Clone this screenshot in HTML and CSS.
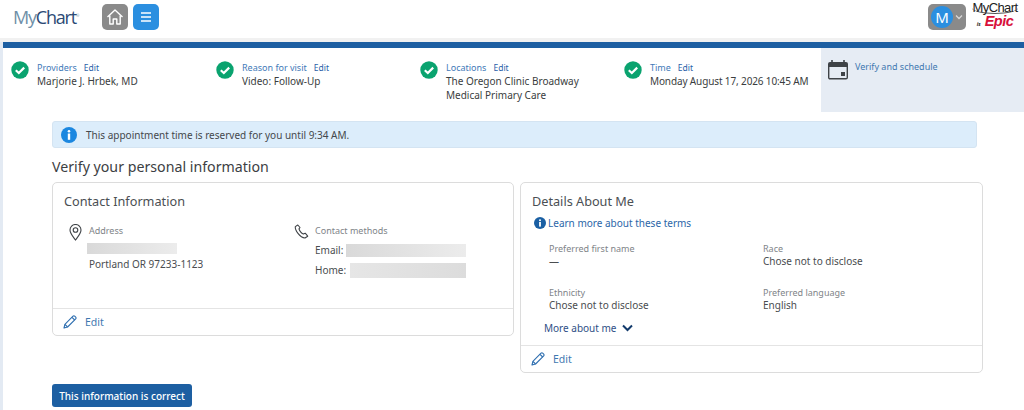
FILE: index.html
```html
<!DOCTYPE html>
<html lang="en">
<head>
<meta charset="utf-8">
<title>Verify</title>
<link rel="stylesheet" href="styles.css">
</head>
<body>
<header class="top">
  <div class="logo"><span class="my">My</span><span class="chart">Chart</span><sup class="tm">®</sup></div>
  <button class="sq home"><svg width="18" height="18" viewBox="0 0 18 18" fill="none" stroke="#fff" stroke-width="1.4" stroke-linejoin="round"><path d="M1.5 9 9 2l7.500 7"/><path d="M3.800 7.500V16h3.400v-5h3.600v5h3.400V7.500"/></svg></button>
  <button class="sq menu"><svg width="14" height="12" viewBox="0 0 14 12" stroke="#fff" stroke-width="1.500"><path d="M2 2h10M2 6h10M2 10h10"/></svg></button>
  <div class="spacer"></div>
  <div class="acct"><span class="avatar">M</span><svg width="8" height="6" viewBox="0 0 8 6" fill="none" stroke="#d8d8d8" stroke-width="1.300"><path d="M1 1.500 4 4.500 7 1.500"/></svg></div>
  <div class="epic">
    <div class="epic-mc">MyChart</div>
    <div class="epic-line"><span class="is">is</span><span class="ep">Epic</span></div>
  </div>
</header>
<div class="shell">
  <div class="bar"></div>
  <nav class="steps">
    <div class="step s1">
      <svg class="chk" width="18" height="18" viewBox="0 0 18 18"><circle cx="9" cy="9" r="8.700" fill="#0aa36f"/><path d="M4.800 9.300 7.800 12l5.400-5.400" fill="none" stroke="#fff" stroke-width="2.200"/></svg>
      <div><div class="st"><span class="lbl">Providers</span><span class="ed">Edit</span></div><div class="val">Marjorie J. Hrbek, MD</div></div>
    </div>
    <div class="step s2">
      <svg class="chk" width="18" height="18" viewBox="0 0 18 18"><circle cx="9" cy="9" r="8.700" fill="#0aa36f"/><path d="M4.800 9.300 7.800 12l5.400-5.400" fill="none" stroke="#fff" stroke-width="2.200"/></svg>
      <div><div class="st"><span class="lbl">Reason for visit</span><span class="ed">Edit</span></div><div class="val">Video: Follow-Up</div></div>
    </div>
    <div class="step s3">
      <svg class="chk" width="18" height="18" viewBox="0 0 18 18"><circle cx="9" cy="9" r="8.700" fill="#0aa36f"/><path d="M4.800 9.300 7.800 12l5.400-5.400" fill="none" stroke="#fff" stroke-width="2.200"/></svg>
      <div><div class="st"><span class="lbl">Locations</span><span class="ed">Edit</span></div><div class="val">The Oregon Clinic Broadway<br>Medical Primary Care</div></div>
    </div>
    <div class="step s4">
      <svg class="chk" width="18" height="18" viewBox="0 0 18 18"><circle cx="9" cy="9" r="8.700" fill="#0aa36f"/><path d="M4.800 9.300 7.800 12l5.400-5.400" fill="none" stroke="#fff" stroke-width="2.200"/></svg>
      <div><div class="st"><span class="lbl">Time</span><span class="ed">Edit</span></div><div class="val">Monday August 17, 2026 10:45 AM</div></div>
    </div>
    <div class="step s5">
      <svg class="cal" width="22" height="22" viewBox="0 0 22 22"><path d="M1 5a2 2 0 0 1 2-2h16a2 2 0 0 1 2 2v3H1z" fill="#3f4347"/><path d="M5 1v3M17 1v3" stroke="#3f4347" stroke-width="1.600"/><path d="M1.700 7v11.500a1.300 1.300 0 0 0 1.300 1.300h16a1.300 1.300 0 0 0 1.300-1.300V7" fill="none" stroke="#3f4347" stroke-width="1.400"/><rect x="14" y="13" width="4" height="4" fill="#3f4347"/></svg>
      <div class="st"><span class="lbl cur">Verify and schedule</span></div>
    </div>
  </nav>
  <main class="main">
    <div class="alert">
      <svg width="16" height="16" viewBox="0 0 16 16"><circle cx="8" cy="8" r="8" fill="#1b87e0"/><circle cx="8" cy="4.200" r="1.300" fill="#fff"/><rect x="6.800" y="6.500" width="2.400" height="6.300" fill="#fff"/></svg>
      <span>This appointment time is reserved for you until 9:34 AM.</span>
    </div>
    <h1 class="title">Verify your personal information</h1>
    <div class="cards">
      <section class="card c1">
        <div class="body">
          <h2>Contact Information</h2>
          <div class="contact">
            <div class="col addr">
              <svg class="ico" width="13" height="17" viewBox="0 0 13 17" fill="none" stroke="#3f4347" stroke-width="1.100"><path d="M6.500 16C3.500 12 1 9.300 1 6a5.500 5.500 0 0 1 11 0c0 3.300-2.500 6-5.500 10z"/><circle cx="6.500" cy="6" r="2.300"/></svg>
              <div>
                <div class="small">Address</div>
                <div class="blur b-addr"></div>
                <div class="txt">Portland OR 97233-1123</div>
              </div>
            </div>
            <div class="col meth">
              <svg class="ico" width="15" height="15" viewBox="0 0 15 15" fill="none" stroke="#3f4347" stroke-width="1.100" stroke-linejoin="round"><path d="M3.800 1 1.300 2.600C.8 6 5.700 13.500 11 14l2.700-1.800-2.500-3-2 .9C7.500 9.500 5.300 6.500 5 4.800l1-1.300z"/></svg>
              <div>
                <div class="small">Contact methods</div>
                <div class="rowb r1"><span class="txt">Email:</span><div class="blur b-mail"></div></div>
                <div class="rowb"><span class="txt">Home:</span><div class="blur b-home"></div></div>
              </div>
            </div>
          </div>
        </div>
        <div class="foot">
          <svg width="14" height="14" viewBox="0 0 14 14" fill="none" stroke="#2f6fb0" stroke-width="1.100" stroke-linejoin="round"><path d="M1 13l.9-3.700L10 1.200a1.200 1.200 0 0 1 1.700 0l1 1a1.200 1.200 0 0 1 0 1.700L4.600 12z"/><path d="M1.900 9.300 4.600 12M9 2.300l2.700 2.700"/></svg>
          <span class="edit">Edit</span>
        </div>
      </section>
      <section class="card c2">
        <div class="body">
          <h2>Details About Me</h2>
          <div class="learn"><svg width="12" height="12" viewBox="0 0 12 12"><circle cx="6" cy="6" r="6" fill="#1a5fa3"/><circle cx="6" cy="3.200" r="1" fill="#fff"/><rect x="5.100" y="5" width="1.800" height="4.600" fill="#fff"/></svg><span>Learn more about these terms</span></div>
          <div class="grid">
            <div><div class="small">Preferred first name</div><div class="txt">—</div></div>
            <div><div class="small">Race</div><div class="txt">Chose not to disclose</div></div>
            <div><div class="small">Ethnicity</div><div class="txt">Chose not to disclose</div></div>
            <div><div class="small">Preferred language</div><div class="txt">English</div></div>
          </div>
          <div class="more"><span>More about me</span><svg width="11" height="8" viewBox="0 0 11 8" fill="none" stroke="#123a6b" stroke-width="2"><path d="M1 1.500 5.500 6 10 1.500"/></svg></div>
        </div>
        <div class="foot">
          <svg width="14" height="14" viewBox="0 0 14 14" fill="none" stroke="#2f6fb0" stroke-width="1.100" stroke-linejoin="round"><path d="M1 13l.9-3.700L10 1.200a1.200 1.200 0 0 1 1.700 0l1 1a1.200 1.200 0 0 1 0 1.700L4.600 12z"/><path d="M1.900 9.300 4.600 12M9 2.300l2.700 2.700"/></svg>
          <span class="edit">Edit</span>
        </div>
      </section>
    </div>
    <button class="cta">This information is correct</button>
  </main>
</div>
</body>
</html>
```
FILE: styles.css
```css
* { box-sizing: border-box; }
html, body { margin: 0; height: 410px; overflow: hidden; }
body { background: #fff; font-family: "Noto Sans", "Open Sans", sans-serif; color: #3c4043; font-size: 10px; }
button { font-family: inherit; border: 0; padding: 0; }
.top { height: 42px; display: flex; align-items: center; background: #fff; padding: 0 6px 5px 13px; border-bottom: 4px solid #f1f1f1; }
.logo { width: 89px; font-family: "Open Sans", sans-serif; font-size: 18px; letter-spacing: -1.2px; line-height: 1; }
.my { color: #6f8fa8; }
.chart { color: #2c4a75; }
.tm { font-size: 4px; color: #6f8fa8; }
.sq { width: 26px; height: 26px; border-radius: 5px; display: flex; align-items: center; justify-content: center; margin-right: 5px; }
.home { background: #8a8a8a; }
.menu { background: #2b8fe0; margin-right: 0; }
.spacer { flex: 1; }
.acct { width: 38px; height: 26px; background: #8a8a8a; border-radius: 5px; display: flex; align-items: center; padding-left: 3px; gap: 2px; }
.avatar { width: 22px; height: 22px; border-radius: 50%; background: #2b8fe0; color: #fff; font-size: 15px; font-weight: 400; display: flex; align-items: center; justify-content: center; }
.epic { width: 46px; margin-left: 6px; text-align: center; }
.epic-mc { font-family: "Liberation Sans", sans-serif; font-size: 13px; letter-spacing: -0.6px; color: #222; line-height: 11px; border-bottom: 1px solid #555; border-radius: 0 0 50% 50%; height: 12px; }
.epic-line { display: flex; justify-content: center; align-items: baseline; gap: 4px; line-height: 14px; }
.is { font-size: 5px; font-style: italic; color: #222; font-weight: 700; }
.ep { font-family: "Liberation Sans", sans-serif; font-size: 14.500px; font-weight: 700; font-style: italic; color: #d8103a; letter-spacing: -0.5px; }
.shell { border-left: 3px solid #e3eaf3; height: 368px; }
.bar { height: 6px; background: #1d5fa2; }
.steps { display: flex; height: 64px; }
.step { display: flex; gap: 8px; padding-top: 13px; flex: none; }
.chk { flex: none; }
.s1 { width: 204px; padding-left: 8px; }
.s2 { width: 204px; padding-left: 9px; }
.s3 { width: 205px; padding-left: 9px; }
.s4 { width: 205px; padding-left: 8px; }
.s4 .val { letter-spacing: -0.13px; }
.s5 { flex: 1; background: #e6ecf4; padding: 11px 0 0 6px; gap: 6px; }
.cal { flex: none; }
.s5 .st { padding-top: 1px; }
.st { font-size: 9px; line-height: 13px; white-space: nowrap; }
.lbl { color: #3f7ab8; margin-right: 7px; }
.lbl.cur { color: #3f78b0; margin: 0; }
.ed { color: #2a5fa8; font-size: 8.500px; }
.val { font-size: 10px; line-height: 14px; color: #3a3d40; white-space: nowrap; }
.main { padding: 9px 0 0 49px; }
.alert { width: 925px; height: 27px; background: #dcedfb; border: 1px solid #d4e4f2; border-radius: 3px; display: flex; align-items: center; gap: 9px; padding-left: 8px; font-size: 10px; color: #44484c; }
.title { margin: 9px 0 0; font-size: 14.200px; font-weight: 400; line-height: 20px; color: #3c4043; }
.cards { display: flex; gap: 6px; margin-top: 5px; align-items: flex-start; }
.card { border: 1px solid #dcdcdc; border-radius: 5px; background: #fff; display: flex; flex-direction: column; }
.c1 { width: 462px; height: 154px; }
.c2 { width: 463px; height: 191px; }
.body { flex: 1; padding: 9px 11px 0; }
h2 { margin: 0; font-size: 12.700px; font-weight: 400; line-height: 18px; color: #4b4f53; }
.contact { display: flex; margin-top: 14px; padding-left: 5px; }
.col { display: flex; gap: 7px; }
.addr { width: 225px; }
.meth { gap: 6px; }
.small { font-size: 9px; line-height: 13px; color: #808488; }
.txt { font-size: 10px; line-height: 14px; color: #4a4d50; white-space: nowrap; }
.blur { height: 12px; background: linear-gradient(90deg, #d9d9d9, #ececec); }
.b-addr { width: 90px; margin: 6px 0 0 -2px; height: 11px; }
.addr .txt { margin-top: 3px; }
.rowb { display: flex; align-items: center; margin-top: 6px; height: 14px; }
.r1 { margin-top: 6px; }
.b-mail { width: 120px; height: 13px; margin-left: 3px; }
.b-home { width: 116px; height: 15px; margin-left: 4px; background: linear-gradient(90deg, #e6e6e6, #dcdcdc); }
.foot { height: 27px; border-top: 1px solid #e4e4e4; display: flex; align-items: center; gap: 8px; padding-left: 10px; }
.edit { font-size: 10.500px; color: #3f78b0; }
.learn { display: flex; align-items: center; gap: 2px; font-size: 10px; color: #2b66a8; margin-top: 6px; padding-left: 2px; line-height: 14px; }
.grid { display: grid; grid-template-columns: 214px 1fr; row-gap: 18px; padding-left: 17px; margin-top: 12px; }
.grid .txt { margin-top: -1px; }
.more { display: flex; align-items: center; gap: 6px; font-size: 10px; color: #2e4f86; padding-left: 12px; margin-top: 9px; line-height: 14px; }
.cta { display: block; margin-top: 11px; width: 140px; height: 23px; background: #1d5fa2; color: #fff; border-radius: 3px; font-size: 10px; font-weight: 500; }
```
